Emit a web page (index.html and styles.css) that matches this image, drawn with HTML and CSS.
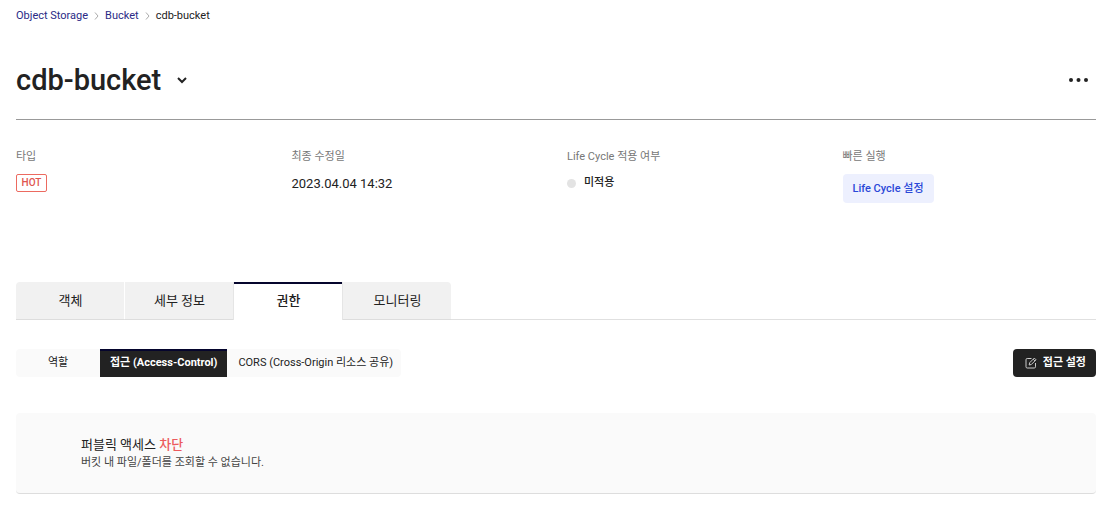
FILE: index.html
```html
<!DOCTYPE html>
<html lang="ko">
<head>
<meta charset="utf-8">
<meta name="viewport" content="width=device-width, initial-scale=1">
<title>cdb-bucket</title>
<link rel="stylesheet" href="styles.css">
</head>
<body>
<main class="page">
  <nav class="breadcrumb" aria-label="breadcrumb">
    <a href="#">Object Storage</a>
    <svg class="sep" viewBox="0 0 5 8" aria-hidden="true"><path d="M1 .5 4 4 1 7.5"/></svg>
    <a href="#">Bucket</a>
    <svg class="sep" viewBox="0 0 5 8" aria-hidden="true"><path d="M1 .5 4 4 1 7.5"/></svg>
    <span>cdb-bucket</span>
  </nav>

  <header class="title-bar">
    <h1>cdb-bucket</h1>
    <button class="icon-button" type="button" aria-label="버킷 선택">
      <svg class="chevron" viewBox="0 0 10 8" aria-hidden="true"><path d="M1 2 5 6 9 2"/></svg>
    </button>
    <button class="icon-button more" type="button" aria-label="더보기">
      <svg class="dots" viewBox="0 0 20 6" aria-hidden="true"><circle cx="3" cy="3" r="2"/><circle cx="10.5" cy="3" r="2"/><circle cx="18" cy="3" r="2"/></svg>
    </button>
  </header>

  <dl class="summary">
    <div><dt>타입</dt><dd><span class="badge">HOT</span></dd></div>
    <div><dt>최종 수정일</dt><dd class="date">2023.04.04 14:32</dd></div>
    <div><dt>Life Cycle 적용 여부</dt><dd class="status"><span class="dot"></span>미적용</dd></div>
    <div><dt>빠른 실행</dt><dd><button class="soft-button" type="button">Life Cycle 설정</button></dd></div>
  </dl>

  <div class="tabs" role="tablist">
    <button class="tab" type="button" role="tab">객체</button>
    <button class="tab" type="button" role="tab">세부 정보</button>
    <button class="tab selected" type="button" role="tab" aria-selected="true">권한</button>
    <button class="tab" type="button" role="tab">모니터링</button>
  </div>

  <div class="toolbar">
    <div class="subtabs" role="tablist">
      <button class="subtab first" type="button" role="tab">역할</button>
      <button class="subtab selected" type="button" role="tab" aria-selected="true">접근 (Access-Control)</button>
      <button class="subtab" type="button" role="tab">CORS (Cross-Origin 리소스 공유)</button>
    </div>
    <button class="dark-button" type="button">
      <svg class="edit" viewBox="0 0 12 12" aria-hidden="true"><path d="M6.5 1.5H2.2Q1 1.5 1 2.7V9.8Q1 11 2.2 11H9.3Q10.5 11 10.5 9.8V6M4.2 8 4.6 5.8 9.3 1.1 11 2.8 6.3 7.5ZM8.2 2.2 9.9 3.9"/></svg>
      접근 설정
    </button>
  </div>

  <section class="panel">
    <h2>퍼블릭 액세스 <em>차단</em></h2>
    <p>버킷 내 파일/폴더를 조회할 수 없습니다.</p>
  </section>
</main>
</body>
</html>
```

FILE: styles.css
```css
* { box-sizing: border-box; }
body {
  margin: 0;
  background: #fff;
  color: #222;
  font: 11px/16px Roboto, "Noto Sans CJK KR", sans-serif;
}
button { margin: 0; border: 0; padding: 0; background: none; color: inherit; font: inherit; cursor: pointer; }
h1, h2, p, dl, dd { margin: 0; }
.page { padding: 8px 13px 0 16px; }

.breadcrumb { display: flex; align-items: center; gap: 6px; }
.breadcrumb a { color: #2a2a86; text-decoration: none; }
.sep { width: 5px; height: 8px; fill: none; stroke: #aaa; }

.title-bar {
  display: flex;
  align-items: center;
  gap: 16px;
  height: 96px;
  padding: 16px 8px 0 0;
  margin-bottom: 28px;
  border-bottom: 1px solid #999;
}
.title-bar h1 { font-size: 29px; line-height: 40px; font-weight: 500; }
.icon-button { display: flex; }
.chevron { width: 10px; height: 8px; fill: none; stroke: #222; stroke-width: 2; }
.more { margin-left: auto; }
.dots { width: 20px; height: 6px; fill: #222; }

.summary { display: grid; grid-template-columns: repeat(4, 1fr); gap: 22px; min-height: 134px; }
.summary dt { padding-top: 1px; margin-bottom: 9px; color: #777; }
.badge {
  display: block;
  width: 31px;
  border: 1px solid #ec6a60;
  border-radius: 2px;
  color: #e0554f;
  font-size: 10px;
  font-weight: 500;
  text-align: center;
}
.date { font-size: 13px; line-height: 20px; }
.status { display: flex; align-items: center; gap: 8px; padding-top: 1px; font-weight: 500; }
.dot { width: 9px; height: 9px; border-radius: 50%; background: #e3e3e3; }
.soft-button { height: 29px; padding: 0 10px; border-radius: 4px; background: #edf0fe; color: #2a48d8; font-weight: 500; }

.tabs { display: flex; gap: 1px; border-bottom: 1px solid #e0e0e0; margin-bottom: 29px; }
.tab { width: 108px; height: 38px; margin-bottom: -1px; padding-left: 1px; border-bottom: 1px solid #ddd; background: #f1f1f1; font-size: 13px; }
.tab:first-child { border-radius: 4px 0 0 0; }
.tab:last-child { border-radius: 0 4px 0 0; }
.tab.selected { padding-bottom: 2px; border-top: 2px solid #05052d; border-bottom-color: #fff; background: #fff; box-shadow: 1px 0 #e5e5e5, -1px 0 #e5e5e5; font-weight: 500; }

.toolbar { display: flex; justify-content: space-between; margin-bottom: 36px; }
.subtabs { display: flex; border-radius: 4px; background: #fafafa; }
.subtab { height: 28px; padding: 0 8px 0 11px; }
.subtab.first { width: 84px; padding: 0; }
.subtab.selected { padding: 0 10px 2px; border-top: 2px solid #05052d; background: #222; color: #fff; font-weight: 700; }
.dark-button { display: flex; align-items: center; gap: 6px; height: 28px; padding: 0 10px 0 12px; border-radius: 4px; background: #222; color: #fff; font-weight: 700; }
.edit { width: 12px; height: 12px; fill: none; stroke: #ccc; }

.panel { padding: 22px 65px; border-bottom: 1px solid #ddd; border-radius: 4px; background: #fafafa; }
.panel h2 { font-size: 13px; line-height: 20px; font-weight: 400; }
.panel em { color: #ec5a5e; font-style: normal; font-weight: 500; }
.panel p { color: #444; }
```
